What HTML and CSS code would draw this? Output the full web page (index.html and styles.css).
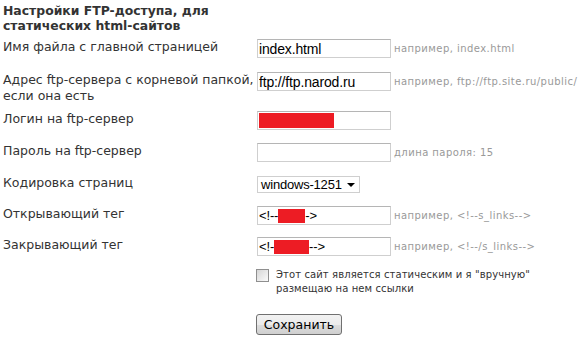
FILE: index.html
```html
<!DOCTYPE html>
<html lang="ru">
<head>
  <meta charset="UTF-8">
  <title>Настройки FTP-доступа</title>
  <link rel="stylesheet" href="styles.css">
</head>
<body>
  <h2 class="title">Настройки FTP-доступа, для<br>статических html-сайтов</h2>

  <div class="form">
    <label class="lbl" for="index">Имя файла с главной страницей</label>
    <input class="field" id="index" type="text" value="index.html">
    <span class="hint">например, index.html</span>

    <label class="lbl" for="host">Адрес ftp-сервера с корневой папкой,<br>если она есть</label>
    <input class="field" id="host" type="text" value="ftp://ftp.narod.ru">
    <span class="hint">например, ftp://ftp.site.ru/public/</span>

    <label class="lbl" for="login">Логин на ftp-сервер</label>
    <div class="field fake" id="login"><span class="redact login-redact"></span></div>
    <span class="hint"></span>

    <label class="lbl" for="pass">Пароль на ftp-сервер</label>
    <input class="field" id="pass" type="password">
    <span class="hint">длина пароля: 15</span>

    <label class="lbl" for="enc">Кодировка страниц</label>
    <div class="select" id="enc">windows-1251 <span class="arrow"></span></div>
    <span class="hint"></span>

    <label class="lbl">Открывающий тег</label>
    <div class="field fake">&lt;!--<span class="redact tag-open"></span>-&gt;</div>
    <span class="hint">например, &lt;!--s_links--&gt;</span>

    <label class="lbl">Закрывающий тег</label>
    <div class="field fake">&lt;!-<span class="redact tag-close"></span>--&gt;</div>
    <span class="hint">например, &lt;!--/s_links--&gt;</span>
  </div>

  <div class="check-row">
    <span class="checkbox"></span>
    <span class="check-text">Этот сайт является статическим и я "вручную"<br>размещаю на нем ссылки</span>
  </div>

  <div class="actions">
    <button class="save-btn">Сохранить</button>
  </div>
</body>
</html>
```

FILE: styles.css
```css
body {
  margin: 0;
  padding: 3px 0 0 3px;
  background-color: #fff;
  color: #333;
  font-family: "DejaVu Sans", Verdana, sans-serif;
  font-size: 12.5px;
}
.title {
  margin: 0;
  font-size: 12.4px;
  font-weight: bold;
  line-height: 15px;
  color: #333;
}
.form {
  display: grid;
  grid-template-columns: 251px 134px auto;
  grid-template-rows: 33px 39px 32px 32px 31px 31px 31px;
  column-gap: 3px;
  margin-top: 6px;
  align-items: start;
}
.lbl {
  line-height: 16px;
  white-space: nowrap;
}
.field {
  box-sizing: border-box;
  width: 134px;
  height: 19px;
  margin: 0;
  padding: 0 1px;
  border: 1px solid #cfcfcf;
  border-top-color: #b5b5b5;
  background: #fff;
  font-family: "Liberation Sans", Arial, sans-serif;
  font-size: 14px;
  color: #000;
  line-height: 17px;
  letter-spacing: -0.15px;
}
.fake {
  display: flex;
  align-items: center;
  font-size: 13px;
}
.redact {
  display: inline-block;
  background: #ed1c24;
  height: 14px;
}
.login-redact { width: 75px; height: 15px; }
.tag-open { width: 27px; }
.tag-close { width: 35px; }
.hint {
  font-size: 10px;
  color: #999;
  padding-top: 4px;
  letter-spacing: 0.45px;
  white-space: nowrap;
}
.select {
  box-sizing: border-box;
  width: 103px;
  height: 17px;
  border: 1px solid #cfcfcf;
  font-family: "Liberation Sans", Arial, sans-serif;
  font-size: 13px;
  letter-spacing: -0.2px;
  line-height: 15px;
  color: #000;
  padding-left: 3px;
  margin-top: 1px;
  display: flex;
  align-items: center;
  gap: 5px;
}
.arrow {
  width: 0;
  height: 0;
  margin-top: 1px;
  border-left: 4px solid transparent;
  border-right: 4px solid transparent;
  border-top: 4px solid #000;
}
.check-row {
  display: flex;
  gap: 7px;
  margin: 0 0 0 253px;
  align-items: flex-start;
}
.checkbox {
  box-sizing: border-box;
  width: 13px;
  height: 13px;
  margin-top: 1px;
  border: 1px solid #8f8f8f;
  background: linear-gradient(135deg, #d6d6d6, #fbfbfb);
}
.check-text {
  font-size: 10px;
  letter-spacing: 0.1px;
  line-height: 14px;
}
.actions {
  margin: 18px 0 0 253px;
}
.save-btn {
  font-family: "DejaVu Sans", Verdana, sans-serif;
  font-size: 12.5px;
  color: #000;
  width: 86px;
  height: 21px;
  padding: 0;
  border: 1px solid #707070;
  border-radius: 3px;
  background: linear-gradient(#f2f2f2 0%, #ebebeb 50%, #dddddd 51%, #cfcfcf 100%);
}
```
